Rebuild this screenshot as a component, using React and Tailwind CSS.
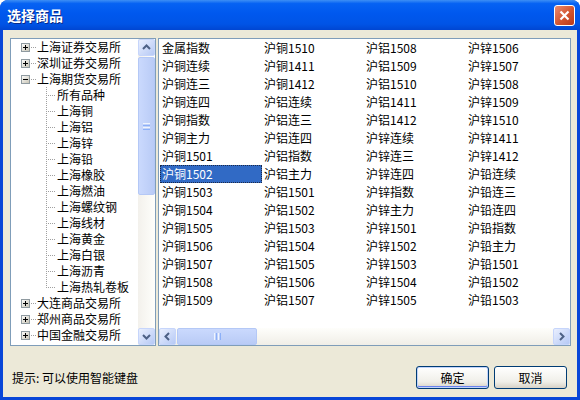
import React from "react";

const tree = [
  { t: "上海证券交易所", k: "p" },
  { t: "深圳证券交易所", k: "p" },
  { t: "上海期货交易所", k: "o" },
  { t: "所有品种", k: "c" },
  { t: "上海铜", k: "c" },
  { t: "上海铝", k: "c" },
  { t: "上海锌", k: "c" },
  { t: "上海铅", k: "c" },
  { t: "上海橡胶", k: "c" },
  { t: "上海燃油", k: "c" },
  { t: "上海螺纹钢", k: "c" },
  { t: "上海线材", k: "c" },
  { t: "上海黄金", k: "c" },
  { t: "上海白银", k: "c" },
  { t: "上海沥青", k: "c" },
  { t: "上海热轧卷板", k: "l" },
  { t: "大连商品交易所", k: "p" },
  { t: "郑州商品交易所", k: "p" },
  { t: "中国金融交易所", k: "p" },
];

const cols = [
  ["金属指数", "沪铜连续", "沪铜连三", "沪铜连四", "沪铜指数", "沪铜主力", "沪铜1501", "沪铜1502", "沪铜1503", "沪铜1504", "沪铜1505", "沪铜1506", "沪铜1507", "沪铜1508", "沪铜1509"],
  ["沪铜1510", "沪铜1411", "沪铜1412", "沪铝连续", "沪铝连三", "沪铝连四", "沪铝指数", "沪铝主力", "沪铝1501", "沪铝1502", "沪铝1503", "沪铝1504", "沪铝1505", "沪铝1506", "沪铝1507"],
  ["沪铝1508", "沪铝1509", "沪铝1510", "沪铝1411", "沪铝1412", "沪锌连续", "沪锌连三", "沪锌连四", "沪锌指数", "沪锌主力", "沪锌1501", "沪锌1502", "沪锌1503", "沪锌1504", "沪锌1505"],
  ["沪锌1506", "沪锌1507", "沪锌1508", "沪锌1509", "沪锌1510", "沪锌1411", "沪锌1412", "沪铅连续", "沪铅连三", "沪铅连四", "沪铅指数", "沪铅主力", "沪铅1501", "沪铅1502", "沪铅1503"],
];

// dotted tree lines, one dot every other pixel
function Dots({ w, h, hx = [], vy = [], vx = 0, vEnd }) {
  const r = [];
  for (const y of vy) for (let x = hx[0]; x <= hx[1]; x += 2) r.push(<rect key={"h" + x} x={x} y={y} width="1" height="1" />);
  if (vEnd !== undefined) for (let y = 0; y <= vEnd; y += 2) r.push(<rect key={"v" + y} x={vx} y={y} width="1" height="1" />);
  return (
    <svg width={w} height={h} className="shrink-0" fill="#A0A0A0">
      {r}
    </svg>
  );
}

function ExpandBox({ open }) {
  return (
    <svg width="9" height="9" className="shrink-0">
      <defs>
        <linearGradient id="bx" x1="0" y1="0" x2="1" y2="1">
          <stop offset="0" stopColor="#ffffff" />
          <stop offset="1" stopColor="#c6c2b2" />
        </linearGradient>
      </defs>
      <rect x="0.5" y="0.5" width="8" height="8" fill="url(#bx)" stroke="#8f9aa0" />
      <rect x="2" y="4" width="5" height="1" fill="#000" />
      {!open && <rect x="4" y="2" width="1" height="5" fill="#000" />}
    </svg>
  );
}

function Arrow({ dir }) {
  const pts = {
    up: "5,10 8.5,6.5 12,10",
    down: "5,7 8.5,10.5 12,7",
    left: "10,5 6.5,8.5 10,12",
    right: "7,5 10.5,8.5 7,12",
  }[dir];
  return (
    <div className="w-[17px] h-[17px] shrink-0 rounded-[2px] border border-[#c6d5fb] bg-[linear-gradient(135deg,#e9effe,#b6c9f5)]">
      <svg width="15" height="15" viewBox="1 1 15 15">
        <polyline points={pts} fill="none" stroke="#4d6185" strokeWidth="2" />
      </svg>
    </div>
  );
}

function Title() {
  return (
    <div className="h-[30px] shrink-0 flex items-center justify-between pl-[7px] pr-[5px] rounded-t-[8px] bg-[linear-gradient(to_bottom,#3d8ff5_0%,#0662f3_12%,#0058ee_45%,#0054e6_80%,#0046d2_100%)]">
      <span className="text-white font-bold text-[14px] leading-none [text-shadow:1px_1px_0_#0a2a8a]">选择商品</span>
      <div className="w-[21px] h-[21px] rounded-[3px] border border-white bg-[linear-gradient(135deg,#eb8b70,#d2542f_55%,#b8391a)] flex items-center justify-center">
        <svg width="11" height="11">
          <path d="M1.5 1.5 L9.5 9.5 M9.5 1.5 L1.5 9.5" stroke="#fff" strokeWidth="2.2" />
        </svg>
      </div>
    </div>
  );
}

function Tree() {
  return (
    <div className="w-[146px] h-[308px] shrink-0 border border-[#7f9db9] bg-white flex">
      <div className="flex-1 flex flex-col overflow-hidden">
        {tree.map((n) =>
          n.k === "p" || n.k === "o" ? (
            <div key={n.t} className="h-[16px] flex items-center shrink-0">
              <div className="w-[10px] shrink-0" />
              <ExpandBox open={n.k === "o"} />
              <Dots w={6} h={1} hx={[1, 5]} vy={[0]} />
              <span className="ml-[1px] whitespace-nowrap">{n.t}</span>
            </div>
          ) : (
            <div key={n.t} className="h-[16px] flex items-center shrink-0">
              <div className="w-[35px] shrink-0" />
              <Dots w={11} h={16} hx={[0, 8]} vy={[8]} vx={0} vEnd={n.k === "l" ? 8 : 15} />
              <span className="whitespace-nowrap">{n.t}</span>
            </div>
          )
        )}
      </div>
      <div className="w-[17px] shrink-0 flex flex-col bg-[linear-gradient(to_right,#f3f1ec,#fefefb)]">
        <Arrow dir="up" />
        <div className="mt-[1px] h-[138px] rounded-[2px] border border-[#b4c8f6] bg-[linear-gradient(to_right,#cad9fd,#b9cbf6)] flex flex-col items-center justify-center gap-[1px]">
          <div className="w-[7px] h-[1px] bg-[#eef4fe]" />
          <div className="w-[7px] h-[1px] bg-[#8cb0f8]" />
          <div className="w-[7px] h-[1px] bg-[#eef4fe]" />
          <div className="w-[7px] h-[1px] bg-[#8cb0f8]" />
        </div>
        <div className="flex-1" />
        <Arrow dir="down" />
      </div>
    </div>
  );
}

function List() {
  return (
    <div className="flex-1 h-[308px] border border-[#7f9db9] bg-white flex flex-col">
      <div className="flex-1 pl-[1px] grid grid-flow-col grid-rows-[repeat(15,18px)] grid-cols-[repeat(4,102px)] content-start">
        {cols.flat().map((s) =>
          s === "沪铜1502" ? (
            <div key={s} className="h-[18px] pl-[1px] bg-[#316ac5] text-white border border-dotted border-[#1c2a48] leading-[16px] whitespace-nowrap">
              {s}
            </div>
          ) : (
            <div key={s} className="h-[18px] pl-[2px] leading-[18px] whitespace-nowrap">
              {s}
            </div>
          )
        )}
      </div>
      <div className="h-[17px] shrink-0 flex bg-[linear-gradient(to_bottom,#fefefb,#f0eee7)]">
        <Arrow dir="left" />
        <div className="ml-[1px] w-[80px] rounded-[2px] border border-[#b4c8f6] bg-[linear-gradient(to_bottom,#cad9fd,#b9cbf6)] flex items-center justify-center gap-[1px]">
          <div className="w-[1px] h-[7px] bg-[#eef4fe]" />
          <div className="w-[1px] h-[7px] bg-[#8cb0f8]" />
          <div className="w-[1px] h-[7px] bg-[#eef4fe]" />
          <div className="w-[1px] h-[7px] bg-[#8cb0f8]" />
        </div>
        <div className="flex-1" />
        <Arrow dir="right" />
      </div>
    </div>
  );
}

export default function App() {
  return (
    <div className="w-[580px] h-[400px] flex flex-col rounded-t-[8px] bg-[#0846d8] font-['Noto_Sans_CJK_SC',sans-serif] text-[12px] text-black">
      <Title />
      <div className="flex-1 mx-[3px] mb-[3px] bg-[#ece9d8] flex flex-col">
        <div className="flex gap-[2px] pl-[7px] pr-[6px] pt-[8px]">
          <Tree />
          <List />
        </div>
        <div className="flex items-center mt-[20px] pl-[9px] pr-[10px]">
          <span className="flex-1 leading-[16px]">提示: 可以使用智能键盘</span>
          <div className="flex gap-[5px]">
            <button className="w-[73px] h-[23px] rounded-[3px] border border-[#003c74] bg-[linear-gradient(to_bottom,#ffffff,#f0efe9_70%,#d8d2c6)] shadow-[inset_0_0_0_1px_#c1d3fb,inset_0_-1px_0_1px_#6982ee] leading-[20px]">
              确定
            </button>
            <button className="w-[73px] h-[23px] rounded-[3px] border border-[#003c74] bg-[linear-gradient(to_bottom,#ffffff,#f0efe9_70%,#d8d2c6)] leading-[20px]">
              取消
            </button>
          </div>
        </div>
      </div>
    </div>
  );
}
